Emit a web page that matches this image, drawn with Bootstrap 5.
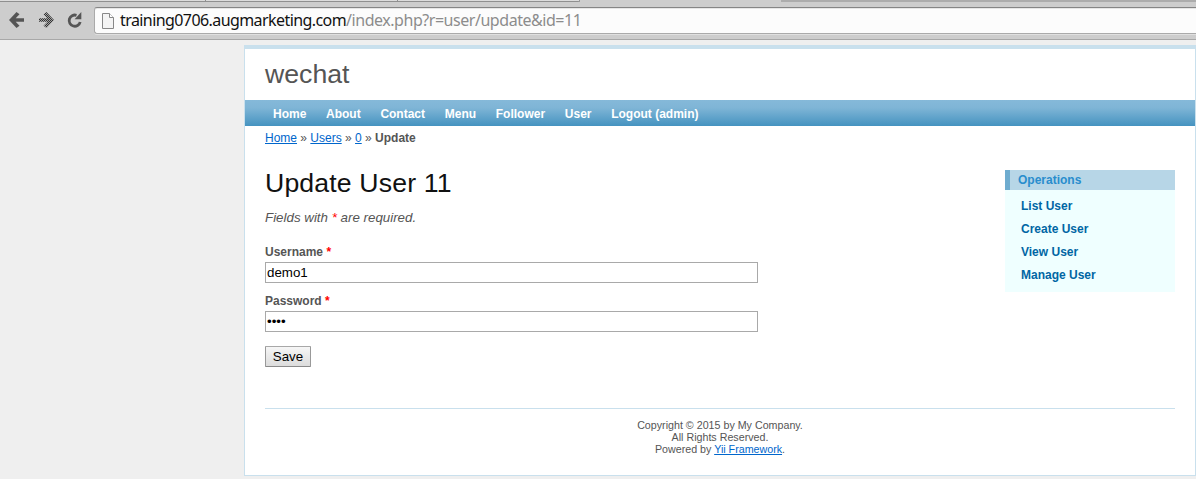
<!DOCTYPE html>
<html lang="en">
<head>
<meta charset="utf-8">
<title>wechat - Update User</title>
<link href="https://cdn.jsdelivr.net/npm/bootstrap@5.3.0/dist/css/bootstrap.min.css" rel="stylesheet">
<style>
body{background:#efefef;color:#555;font:12px/18px "Liberation Sans",Arial,sans-serif;overflow:hidden}
a{color:#06c}
.chrome-bar{height:40px;background:#cdcdcd;border-bottom:1px solid #a8a8a8}
.tab-strip{height:2px;background:#acacac}
.tab-on{height:2px;background:#dcdcdc;border-bottom:1px solid #8f8f8f;border-right:1px solid #8f8f8f}
.tab-a{width:206px}
.tab-b{width:192px}
.tab-c{width:182px;border-radius:0 0 3px 0}
.tab-gap{width:201px;height:2px;background:#cdcdcd}
.tools{height:37px;padding-top:5px}
.icons{width:94px;height:27px}
.address{height:27px;background:#fcfcfc;border:1px solid #aaa;border-top-color:#858585;border-right:0;border-radius:3px 0 0 3px;box-shadow:inset 0 1px #e6e6e6,0 1px #e0e0e0;font:16px/25px "Noto Sans",sans-serif;color:#8c8c8c;padding-left:7px}
.address b{font-weight:400;color:#111;letter-spacing:-.58px}
.url{margin-left:6px;letter-spacing:-.46px}
.page{margin:5px 0 0 244px;width:952px;height:431px;background:#fff;border:1px solid #c9e0ed;border-top-width:4px}
.logo{height:51px;padding:10px 20px 0;font-size:26.67px;line-height:30px}
.menu{height:26px;background:linear-gradient(#85b9d9,#7fb5d6 30%,#4593c0);padding:1px 28px 0;gap:19.7px;line-height:26px}
.menu a{color:#fff;font-weight:700;text-decoration:none}
.crumbs{height:44px;padding:3px 20px 0}
.main{height:238px;padding:0 20px}
h1{font-size:26.67px;line-height:26px;color:#111;font-weight:400;margin:0 0 12px;height:27px;letter-spacing:.14px}
.note{font-style:italic;font-size:13.33px;line-height:18px;margin:0 0 16px}
.req{color:red}
label{display:block;font-weight:700;line-height:18px;height:19px}
.field{display:block;width:493px;height:21px;border:1px solid #a9a9a9;border-radius:0;padding:1px;color:#000;font-size:13.33px;line-height:17px;background:#fff}
.field+label{margin-top:9px}
.save{display:block;margin-top:14px;width:46px;height:21px;padding:0;border:1px solid #979797;border-color:#a8a8a8 #999 #8a8a8a;border-radius:1px;background:linear-gradient(#f6f6f6,#dcdcdc);font-size:13.33px;line-height:19px;color:#000}
.ops{width:170px;height:122px;background:#efffff}
.ops-title{height:20px;background:#b7d6e7;border-left:5px solid #6faccf;padding-left:8px;color:#298dcd;font-weight:700;line-height:20px}
.ops ul{padding:5px 0 0 16px;margin:0}
.ops li{height:23px;line-height:23px}
.ops a{color:#0066a4;font-weight:700;text-decoration:none}
.foot{margin:0 20px;border-top:1px solid #c9e0ed;padding-top:10px;font-size:10.7px;line-height:12px}
</style>
<script src="https://cdn.jsdelivr.net/npm/bootstrap@5.3.0/dist/js/bootstrap.bundle.min.js"></script>
</head>
<body>
<header class="chrome-bar">
  <div class="tab-strip d-flex"><div class="tab-on tab-a"></div><div class="tab-on tab-b"></div><div class="tab-on tab-c"></div><div class="tab-gap"></div></div>
  <div class="tools d-flex">
    <svg class="icons flex-shrink-0" viewBox="0 7 94 27">
      <defs><pattern id="dither" width="2" height="2" patternUnits="userSpaceOnUse"><path d="M0 0h1v1H0zM1 1h1v1H1z" fill="#333"/><path d="M1 0h1v1H1zM0 1h1v1H0z" fill="#a2a2a2"/></pattern></defs>
      <path d="M9 20l7.5-8 3 2.2-3.8 4.1h8.3v3.4h-8.3l3.8 4.1-3 2.2z" fill="#555"/>
      <path d="M54 20l-7.5-8-3 2.2 3.8 4.1H39v3.4h8.3l-3.8 4.1 3 2.2z" fill="url(#dither)"/>
      <path d="M76.5 15.3A5.6 5.6 0 1 0 80.2 22" fill="none" stroke="#555" stroke-width="2.8"/><path d="M81.3 12V19.3H74.6z" fill="#555"/>
    </svg>
    <div class="address d-flex align-items-center flex-grow-1">
      <svg width="12" height="16" viewBox="0 0 12 16"><path d="M.5.5h7l4 4v11H.5z" fill="#f4f4f4" stroke="#888"/><path d="M7.5.5v4h4" fill="#fff" stroke="#888"/></svg>
      <span class="url"><b>training0706.augmarketing.com</b>/index.php?r=user/update&amp;id=11</span>
    </div>
  </div>
</header>
<div class="page">
  <div class="logo">wechat</div>
  <nav class="menu d-flex"><a href="#">Home</a><a href="#">About</a><a href="#">Contact</a><a href="#">Menu</a><a href="#">Follower</a><a href="#">User</a><a href="#">Logout (admin)</a></nav>
  <div class="crumbs"><a href="#">Home</a> » <a href="#">Users</a> » <a href="#">0</a> » <b>Update</b></div>
  <div class="main d-flex justify-content-between">
    <form>
      <h1>Update User 11</h1>
      <p class="note">Fields with <span class="req">*</span> are required.</p>
      <label for="u">Username <span class="req">*</span></label>
      <input id="u" class="field" type="text" value="demo1">
      <label for="p">Password <span class="req">*</span></label>
      <input id="p" class="field" type="password" value="demo">
      <button class="save" type="button">Save</button>
    </form>
    <aside class="ops">
      <div class="ops-title">Operations</div>
      <ul class="list-unstyled"><li><a href="#">List User</a></li><li><a href="#">Create User</a></li><li><a href="#">View User</a></li><li><a href="#">Manage User</a></li></ul>
    </aside>
  </div>
  <footer class="foot text-center">Copyright © 2015 by My Company.<br>All Rights Reserved.<br>Powered by <a href="#">Yii Framework</a>.</footer>
</div>
</body>
</html>
